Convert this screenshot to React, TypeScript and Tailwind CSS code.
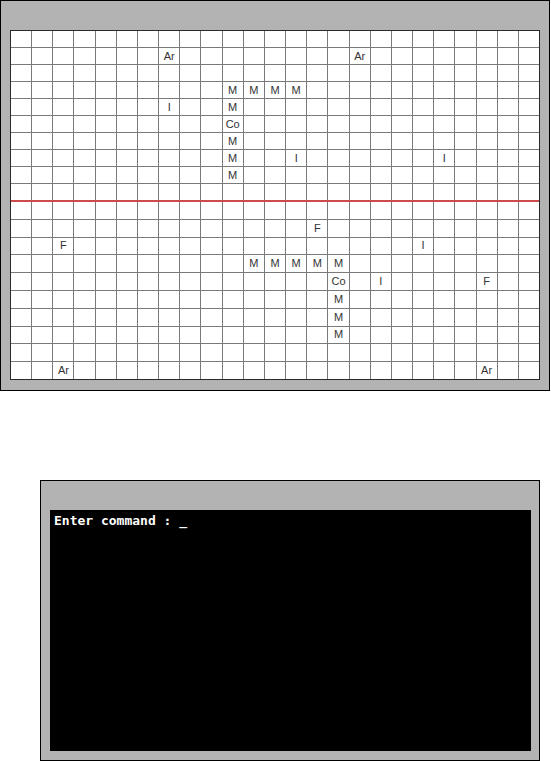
import React from 'react';

// board pieces: [row, col, label]
const pieces: [number, number, string][] = [
  [1, 7, 'Ar'], [1, 16, 'Ar'],
  [3, 10, 'M'], [3, 11, 'M'], [3, 12, 'M'], [3, 13, 'M'],
  [4, 7, 'I'], [4, 10, 'M'],
  [5, 10, 'Co'],
  [6, 10, 'M'],
  [7, 10, 'M'], [7, 13, 'I'], [7, 20, 'I'],
  [8, 10, 'M'],
  [11, 14, 'F'],
  [12, 2, 'F'], [12, 19, 'I'],
  [13, 11, 'M'], [13, 12, 'M'], [13, 13, 'M'], [13, 14, 'M'], [13, 15, 'M'],
  [14, 15, 'Co'], [14, 17, 'I'], [14, 22, 'F'],
  [15, 15, 'M'],
  [16, 15, 'M'],
  [17, 15, 'M'],
  [19, 2, 'Ar'], [19, 22, 'Ar'],
];

const COLS = 25;

const labelAt = (r: number, c: number) => {
  const p = pieces.find(([pr, pc]) => pr === r && pc === c);
  return p ? p[2] : '';
};

const Half: React.FC<{ from: number; rowsClass: string }> = ({ from, rowsClass }) => {
  const cells = [];
  for (let r = from; r < from + 10; r++) {
    for (let c = 0; c < COLS; c++) {
      cells.push(
        <div
          key={`${r}-${c}`}
          className="bg-white flex items-center justify-center text-[11px] leading-none text-[#333]"
        >
          {labelAt(r, c)}
        </div>
      );
    }
  }
  return (
    <div className={`grid grid-cols-[repeat(25,minmax(0,1fr))] gap-px bg-[#7a7a7a] ${rowsClass}`}>
      {cells}
    </div>
  );
};

const App: React.FC = () => {
  return (
    <div className="w-[551px] h-[761px] bg-white font-['Liberation_Sans',Arial,sans-serif]">
      {/* game board */}
      <div className="w-[550px] h-[391px] border border-black bg-[#b3b3b3] pt-[29px] pl-[9px]">
        <div className="w-[530px] border border-[#2a2a2a] flex flex-col">
          <Half from={0} rowsClass="grid-rows-[repeat(10,16px)]" />
          <div className="h-[2px] bg-[#cd4b4b]"></div>
          <Half from={10} rowsClass="h-[177px] grid-rows-[repeat(10,minmax(0,1fr))]" />
        </div>
      </div>

      {/* console */}
      <div className="mt-[89px] ml-[40px] w-[500px] h-[281px] border border-black bg-[#b3b3b3] pt-[29px] pl-[9px]">
        <div className="w-[481px] h-[241px] bg-black pt-[3px] pl-[4px]">
          <p className="font-['DejaVu_Sans_Mono',monospace] font-bold text-[13px] leading-[15px] text-white whitespace-pre">
            Enter command : _
          </p>
        </div>
      </div>
    </div>
  );
};

export default App;
